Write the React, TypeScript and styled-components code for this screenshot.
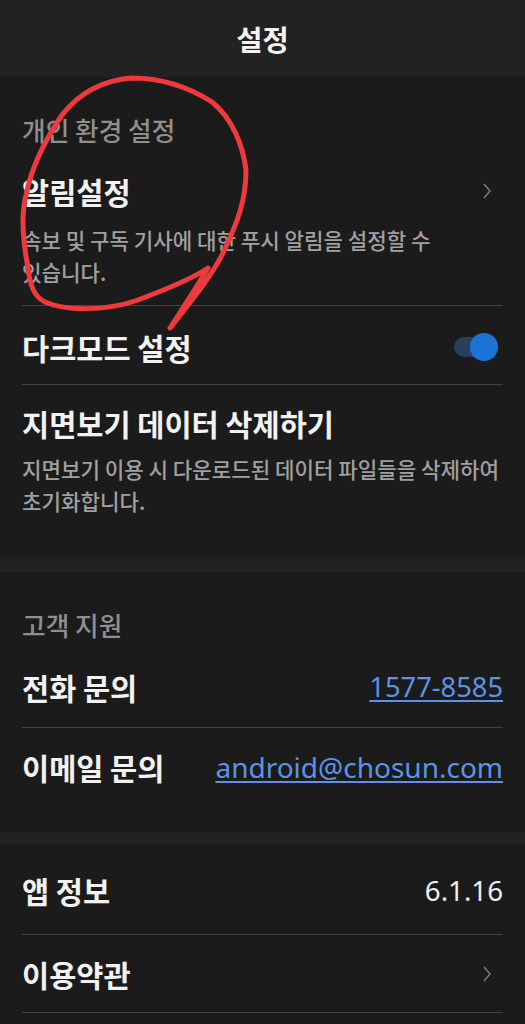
import React from 'react';
import styled, { createGlobalStyle } from 'styled-components';

const GlobalStyle = createGlobalStyle`
  html, body {
    margin: 0;
    padding: 0;
    background: #1b1b1b;
    font-family: "Noto Sans CJK KR", "Noto Sans", sans-serif;
  }
`;

const Page = styled.div`
  position: relative;
  width: 525px;
  height: 1024px;
  overflow: hidden;
  background: #1b1b1b;
`;

const Header = styled.header`
  height: 77px;
  background: #222222;
  color: #f4f4f4;
  font-size: 28.5px;
  font-weight: 700;
  display: flex;
  align-items: center;
  justify-content: center;
`;

const Section = styled.section<{ $height: number }>`
  height: ${({ $height }) => $height}px;
  padding: 0 22px;
  box-sizing: border-box;
`;

const Band = styled.div`
  height: 13px;
  background: #222222;
`;

const SectionTitle = styled.h2<{ $height: number }>`
  margin: 0;
  height: ${({ $height }) => $height}px;
  display: flex;
  align-items: flex-end;
  color: #8f8f8f;
  font-size: 25.7px;
  font-weight: 500;
  line-height: 34px;
`;

const Row = styled.div<{ $height: number; $top?: number; $noBorder?: boolean }>`
  height: ${({ $height }) => $height}px;
  padding-top: ${({ $top }) => $top ?? 0}px;
  box-sizing: border-box;
  border-bottom: ${({ $noBorder }) => ($noBorder ? 'none' : '1px solid #444444')};
  display: flex;
  align-items: center;
  justify-content: space-between;
`;

const TextRow = styled(Row)`
  display: block;
`;

const TitleLine = styled.div`
  height: 40px;
  display: flex;
  align-items: center;
  justify-content: space-between;
`;

const Title = styled.span`
  color: #f2f2f2;
  font-size: 29.5px;
  font-weight: 700;
  line-height: 38px;
  white-space: nowrap;
`;

const Description = styled.p<{ $gap: number; $width: number }>`
  margin: ${({ $gap }) => $gap}px 0 0;
  width: ${({ $width }) => $width}px;
  color: #a0a0a0;
  font-size: 21.2px;
  font-weight: 500;
  line-height: 32px;
  word-break: keep-all;
`;

const Link = styled.a<{ $size: number }>`
  color: #5c93e6;
  font-family: "Noto Sans", sans-serif;
  font-size: ${({ $size }) => $size}px;
  text-decoration: underline;
  text-decoration-thickness: 2px;
  text-underline-offset: 3px;
`;

const Value = styled.span`
  color: #f0f0f0;
  font-family: "Noto Sans", sans-serif;
  font-size: 27.7px;
`;

const Chevron = styled.svg`
  width: 10px;
  height: 16px;
  margin-right: 11px;
  fill: none;
  stroke: #7d7d7d;
  stroke-width: 1.5;
`;

const Toggle = styled.div`
  position: relative;
  width: 44px;
  height: 20px;
  margin-right: 5px;
  border-radius: 10px;
  background: #28405e;
`;

const Knob = styled.div`
  position: absolute;
  right: 0;
  top: -4px;
  width: 28px;
  height: 28px;
  border-radius: 50%;
  background: #1d72d8;
`;

const Scribble = styled.svg`
  position: absolute;
  left: 0;
  top: 0;
  width: 525px;
  height: 1024px;
  pointer-events: none;
  fill: none;
  stroke: #ee3a3c;
  stroke-width: 5;
  stroke-linecap: round;
  stroke-linejoin: round;
`;

const Arrow = () => (
  <Chevron viewBox="0 0 10 16">
    <path d="M2 1 L8 8 L2 15" />
  </Chevron>
);

export default function App() {
  return (
    <Page>
      <GlobalStyle />
      <Header>설정</Header>
      <Section $height={482}>
        <SectionTitle $height={70}>개인 환경 설정</SectionTitle>
        <TextRow $height={159} $top={24}>
          <TitleLine>
            <Title>알림설정</Title>
            <Arrow />
          </TitleLine>
          <Description $gap={13} $width={430}>
            속보 및 구독 기사에 대한 푸시 알림을 설정할 수 있습니다.
          </Description>
        </TextRow>
        <Row $height={79} $top={3}>
          <Title>다크모드 설정</Title>
          <Toggle>
            <Knob />
          </Toggle>
        </Row>
        <TextRow $height={149} $top={18} $noBorder>
          <TitleLine>
            <Title>지면보기 데이터 삭제하기</Title>
          </TitleLine>
          <Description $gap={10} $width={481}>
            지면보기 이용 시 다운로드된 데이터 파일들을 삭제하여 초기화합니다.
          </Description>
        </TextRow>
      </Section>
      <Band />
      <Section $height={260}>
        <SectionTitle $height={70}>고객 지원</SectionTitle>
        <Row $height={86} $top={4}>
          <Title>전화 문의</Title>
          <Link $size={27.3}>1577-8585</Link>
        </Row>
        <Row $height={78} $noBorder>
          <Title>이메일 문의</Title>
          <Link $size={28}>android@chosun.com</Link>
        </Row>
      </Section>
      <Band />
      <Section $height={179}>
        <Row $height={90}>
          <Title>앱 정보</Title>
          <Value>6.1.16</Value>
        </Row>
        <Row $height={78}>
          <Title>이용약관</Title>
          <Arrow />
        </Row>
      </Section>
      <Scribble viewBox="0 0 525 1024">
        <path d="M170 328 C183 308 196 288 208 268 C190 280 165 290 135 301 C105 311 65 311 45 302 C33 296 30 285 27 262 C23 240 21 215 26 195 C32 165 45 140 62 115 C80 92 105 80 132 78 C165 78 190 88 212 102 C232 118 243 145 246 170 C246 200 238 222 222 255 C212 275 192 300 170 328" />
      </Scribble>
    </Page>
  );
}
